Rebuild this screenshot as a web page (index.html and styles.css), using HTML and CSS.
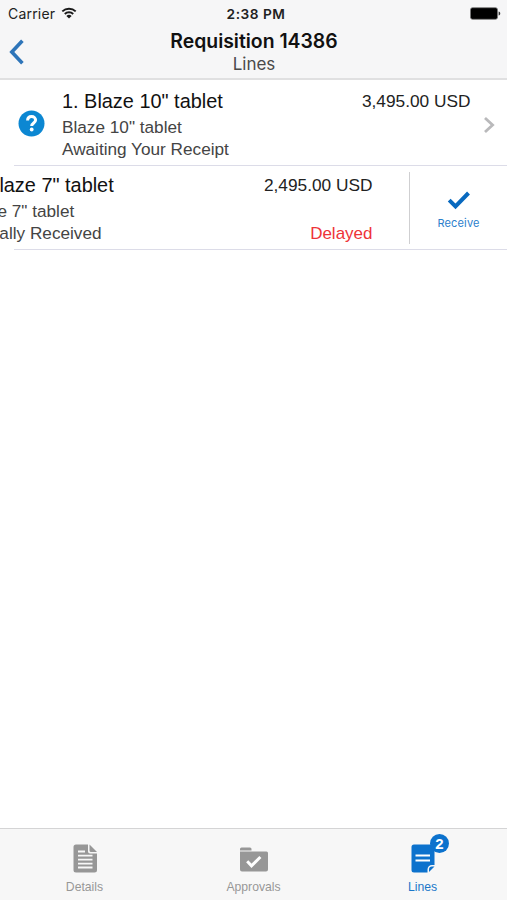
FILE: index.html
```
<!DOCTYPE html>
<html lang="en">
<head>
    <meta charset="UTF-8">
    <meta name="viewport" content="width=device-width, initial-scale=1.0">
    <title>Requisition 14386</title>
    <link rel="stylesheet" href="styles.css">
</head>
<body>
    <header class="header">
        <div class="status-bar">
            <div class="carrier">
                <span class="carrier-name">Carrier</span>
                <svg class="wifi" width="16" height="12" viewBox="0 0 16 12">
                    <path d="M1.3 4.4a9.6 9.6 0 0 1 13.4 0M3.8 7a6 6 0 0 1 8.4 0" fill="none" stroke="#1a1a1a" stroke-width="1.9"/>
                    <path d="M8 11.6L5.4 9a3.7 3.7 0 0 1 5.2 0z" fill="#1a1a1a"/>
                </svg>
            </div>
            <span class="time">2:38 PM</span>
            <svg class="battery" width="31" height="13" viewBox="0 0 31 13">
                <rect x="0.5" y="0.7" width="27" height="11.6" rx="2" fill="#000" stroke="#777" stroke-width="0.8"/>
                <path d="M28.6 4.5c2.2.6 2.2 3.4 0 4z" fill="#333"/>
            </svg>
        </div>
        <div class="nav">
            <button class="back-btn" aria-label="Back">
                <svg width="16" height="26" viewBox="0 0 16 26">
                    <path d="M13.4 1.8L2.8 13l10.6 11.2" fill="none" stroke="#2e75b9" stroke-width="3.6"/>
                </svg>
            </button>
            <div class="titles">
                <h1>Requisition 14386</h1>
                <p class="subtitle">Lines</p>
            </div>
        </div>
    </header>

    <main class="lines">
        <div class="line">
            <div class="line-icon">
                <svg width="27" height="27" viewBox="0 0 27 27">
                    <circle cx="13.5" cy="13.5" r="13" fill="#0c87d2"/>
                    <path d="M9.6 10.6c0-2.6 1.6-4 4-4 2.3 0 4 1.4 4 3.5 0 2.9-3.9 2.9-3.9 5.9" fill="none" stroke="#fff" stroke-width="3"/>
                    <circle cx="13.7" cy="19.5" r="1.9" fill="#fff"/>
                </svg>
            </div>
            <div class="line-body">
                <div class="line-row">
                    <h2>1. Blaze 10" tablet</h2>
                    <span class="price">3,495.00 USD</span>
                </div>
                <p>Blaze 10" tablet</p>
                <p>Awaiting Your Receipt</p>
            </div>
            <svg class="chevron" width="13" height="18" viewBox="0 0 13 18">
                <path d="M2 2l7.6 7L2 16" fill="none" stroke="#b9b9bb" stroke-width="2.8"/>
            </svg>
        </div>

        <div class="line swiped">
            <div class="line-icon"></div>
            <div class="line-body">
                <div class="line-row">
                    <h2>2. Blaze 7" tablet</h2>
                    <span class="price">2,495.00 USD</span>
                </div>
                <p>Blaze 7" tablet</p>
                <div class="line-row">
                    <p>Partially Received</p>
                    <span class="delayed">Delayed</span>
                </div>
            </div>
            <button class="receive-btn">
                <svg width="24" height="20" viewBox="0 0 24 20">
                    <path d="M2.2 10.2l6.3 6.3L21.5 3" fill="none" stroke="#0869bf" stroke-width="4"/>
                </svg>
                <span>Receive</span>
            </button>
        </div>
    </main>

    <nav class="tabs">
        <a class="tab">
            <svg width="24" height="29" viewBox="0 0 24 29">
                <path d="M3 .5h12v7a2 2 0 0 0 2 2h7V26a2.5 2.5 0 0 1-2.5 2.5H3A2.5 2.5 0 0 1 .5 26V3A2.5 2.5 0 0 1 3 .5z" fill="#979797"/>
                <path d="M16.5.5L24 8h-6a1.5 1.5 0 0 1-1.5-1.5z" fill="#979797"/>
                <path d="M5 7.5h7M5 11.6h14.5M5 15.6h14.5M5 19.6h14.5M5 23.5h14.5" stroke="#f7f7f7" stroke-width="1.8"/>
            </svg>
            <span>Details</span>
        </a>
        <a class="tab">
            <svg width="30" height="29" viewBox="0 0 30 29">
                <path d="M1 5a1.5 1.5 0 0 1 1.500-1.500H11A1.500 1.500 0 0 1 12.500 5v1.500H1z" fill="#979797"/>
                <path d="M1 7.600h26.500A1.500 1.500 0 0 1 29 9.100v16.400a2 2 0 0 1-2 2H3a2 2 0 0 1-2-2z" fill="#979797"/>
                <path d="M8.200 17.300l4.300 4.500 8.900-8.800" fill="none" stroke="#fff" stroke-width="3"/>
            </svg>
            <span>Approvals</span>
        </a>
        <a class="tab active">
            <div class="tab-icon">
                <svg width="24" height="29" viewBox="0 0 24 29">
                    <path d="M3 .5h18A2.5 2.5 0 0 1 23.5 3v18H21a4.500 4.500 0 0 0-4.500 4.500v3H3A2.500 2.500 0 0 1 .5 26V3A2.500 2.500 0 0 1 3 .5z" fill="#0c72cd"/>
                    <path d="M18 28v-2.500a3 3 0 0 1 3-3h2.500z" fill="#0c72cd"/>
                    <path d="M4.500 11.500h14.500M4.500 16.500h14.500" stroke="#fff" stroke-width="2"/>
                </svg>
                <span class="badge">2</span>
            </div>
            <span>Lines</span>
        </a>
    </nav>
</body>
</html>
```
FILE: styles.css
```
* {
    margin: 0;
    padding: 0;
    box-sizing: border-box;
}

body {
    height: 100vh;
    display: flex;
    flex-direction: column;
    background: #fff;
    font-family: "Liberation Sans", Arial, sans-serif;
    overflow: hidden;
}

button {
    background: none;
    border: none;
    font-family: inherit;
}

svg {
    display: block;
}

.header {
    height: 80px;
    background: #f6f6f7;
    border-bottom: 2px solid #e0e0e1;
    font-family: Inter, sans-serif;
}

.status-bar {
    height: 27px;
    padding: 0 6px 0 8px;
    display: grid;
    grid-template-columns: 1fr auto 1fr;
    align-items: center;
    font-size: 14px;
    color: #222;
}

.carrier {
    display: flex;
    align-items: center;
    gap: 6px;
    letter-spacing: 0.2px;
}

.wifi {
    margin-top: -2px;
}

.time {
    padding-left: 3px;
    font-size: 13.7px;
    font-weight: 600;
    letter-spacing: 0.5px;
}

.battery {
    justify-self: end;
}

.nav {
    display: grid;
    grid-template-columns: 40px 1fr 40px;
}

.back-btn {
    height: 50px;
    padding-left: 9px;
}

.titles {
    text-align: center;
    padding-left: 1px;
}

h1 {
    font-size: 19.4px;
    font-weight: 600;
    line-height: 28px;
    color: #111;
}

.subtitle {
    font-size: 17px;
    line-height: 18px;
    color: #4a4a4a;
}

.lines {
    flex: 1;
    overflow: hidden;
}

.line {
    height: 85px;
    display: flex;
    position: relative;
    padding-top: 7px;
}

.line::after {
    content: "";
    position: absolute;
    left: 14px;
    right: 0;
    bottom: -1px;
    height: 1px;
    background: #dcdce8;
}

.line-icon {
    width: 62px;
    flex-shrink: 0;
    padding: 23px 0 0 18px;
}

.line-body {
    width: 408.5px;
    flex-shrink: 0;
}

.line-row {
    display: flex;
    justify-content: space-between;
}

h2 {
    font-size: 19.9px;
    font-weight: normal;
    line-height: 28px;
    color: #111;
}

.price {
    font-size: 17.3px;
    line-height: 29px;
    color: #222;
}

.line-body p {
    font-size: 17.2px;
    line-height: 22px;
    color: #444;
}

.chevron {
    margin: 29px 0 0 12.5px;
}

.swiped {
    height: 84px;
    padding-top: 6px;
}

.swiped .line-icon {
    margin-left: -98px;
}

.delayed {
    margin-top: 1px;
    font-size: 17px;
    line-height: 22px;
    color: #ee3338;
}

.receive-btn {
    flex: 1;
    height: 72px;
    margin: 1px 0 0 36.5px;
    border-left: 1px solid #cfcfd1;
    display: flex;
    flex-direction: column;
    align-items: center;
    padding-top: 18px;
    color: #2b80cc;
    font-family: Inter, sans-serif;
    font-size: 11px;
    letter-spacing: 0.15px;
}

.receive-btn span {
    margin-top: 6px;
}

.tabs {
    height: 72px;
    border-top: 1px solid #d4d4d5;
    background: #f7f7f7;
    display: grid;
    grid-template-columns: repeat(3, 1fr);
}

.tab {
    padding-top: 15px;
    display: flex;
    flex-direction: column;
    align-items: center;
    font-size: 12.2px;
    line-height: 14px;
    color: #979797;
}

.tab > span {
    margin-top: 7px;
}

.tab > svg {
    margin-left: 1px;
}

.tab.active {
    color: #1b77c9;
}

.tab-icon {
    position: relative;
    margin-left: 1px;
}

.badge {
    position: absolute;
    top: -10px;
    left: 19px;
    width: 19px;
    height: 19px;
    border-radius: 50%;
    background: #0c72cd;
    color: #fff;
    font-size: 15px;
    font-weight: bold;
    line-height: 19px;
    text-align: center;
}
```
